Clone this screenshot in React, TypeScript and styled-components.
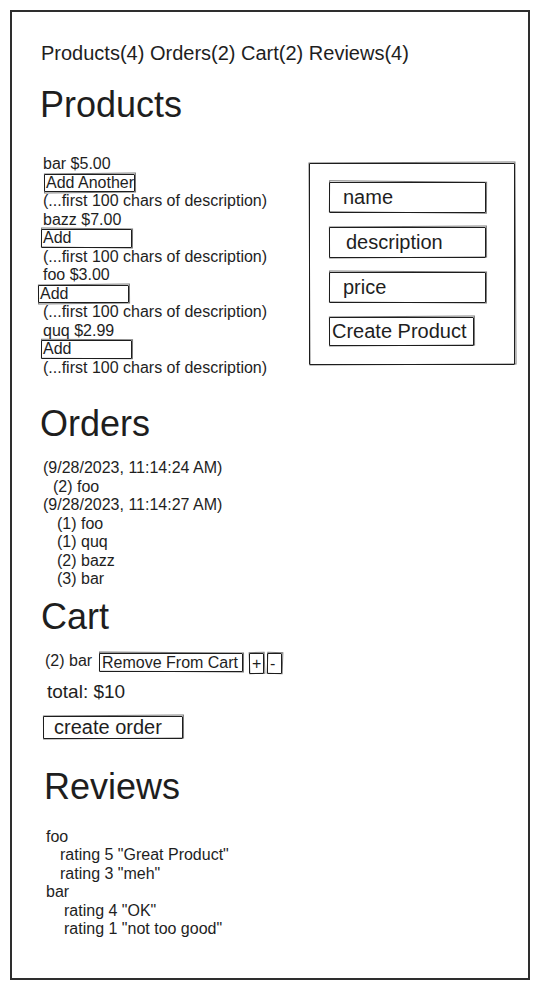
import styled, { createGlobalStyle, css } from "styled-components";

const GlobalStyle = createGlobalStyle`
  html, body {
    margin: 0;
    padding: 0;
    background: #ffffff;
  }
  body {
    font-family: "Liberation Sans", Arial, sans-serif;
    color: #1e1e1e;
  }
`;

// rough hand-drawn outline: a solid border plus a slightly tilted second stroke
const sketch = css<{ $tilt?: number }>`
  position: relative;
  border: 1.5px solid #1e1e1e;
  border-radius: 1px;
  &::after {
    content: "";
    position: absolute;
    inset: -2px -2px -1px -1px;
    border: 1px solid rgba(30, 30, 30, 0.6);
    transform: rotate(${(p) => p.$tilt ?? 0.4}deg);
    pointer-events: none;
  }
`;

const Frame = styled.div`
  box-sizing: border-box;
  width: 520px;
  height: 970px;
  margin: 10px;
  border: 2px solid #2e2e2e;
  padding: 30px 0 0 29px;
`;

const Nav = styled.nav`
  font-size: 20px;
  line-height: 23px;
  white-space: nowrap;
`;

const Heading = styled.h2<{ $top: number; $left?: number }>`
  margin: ${(p) => p.$top}px 0 0 ${(p) => p.$left ?? 0}px;
  font-size: 36px;
  line-height: 41px;
  font-weight: 400;
`;

const ProductsRow = styled.div`
  display: flex;
  align-items: flex-start;
  margin-top: 30px;
`;

const ProductList = styled.div`
  display: flex;
  flex-direction: column;
  width: 266px;
  margin-left: 2px;
  font-size: 16px;
  line-height: 18.5px;
`;

const Line = styled.div<{ $indent?: number }>`
  height: 18.5px;
  padding-left: ${(p) => p.$indent ?? 0}px;
  white-space: nowrap;
`;

const AddButton = styled.button<{ $tilt?: number; $shift?: number }>`
  ${sketch};
  box-sizing: border-box;
  display: block;
  width: 91px;
  height: 18.5px;
  margin-left: ${(p) => p.$shift ?? 0}px;
  padding: 0 0 0 1px;
  background: none;
  font: inherit;
  font-size: 16px;
  line-height: 16px;
  color: #1e1e1e;
  text-align: left;
  white-space: nowrap;
`;

const Panel = styled.form`
  ${sketch};
  box-sizing: border-box;
  display: flex;
  flex-direction: column;
  align-items: flex-start;
  gap: 14px;
  width: 206px;
  height: 202px;
  margin: 8px 0 0 0;
  padding: 18px 0 0 19px;
`;

const InputWrap = styled.div<{ $tilt?: number }>`
  ${sketch};
  box-sizing: border-box;
  width: 157px;
  height: 31px;
`;

const Input = styled.input<{ $pad?: number }>`
  box-sizing: border-box;
  width: 100%;
  height: 100%;
  border: none;
  outline: none;
  background: none;
  padding: 0 0 0 ${(p) => p.$pad ?? 13}px;
  font-family: "Liberation Sans", Arial, sans-serif;
  font-size: 20px;
  color: #1e1e1e;
  &::placeholder {
    color: #1e1e1e;
    opacity: 1;
  }
`;

const CreateButton = styled.button<{ $tilt?: number }>`
  ${sketch};
  box-sizing: border-box;
  width: 145px;
  height: 29px;
  padding: 0 0 0 2px;
  background: none;
  font-family: "Liberation Sans", Arial, sans-serif;
  font-size: 20px;
  color: #1e1e1e;
  text-align: left;
  white-space: nowrap;
`;

const TextList = styled.div<{ $top: number; $left?: number }>`
  margin: ${(p) => p.$top}px 0 0 ${(p) => p.$left ?? 0}px;
  font-size: 16px;
  line-height: 18.5px;
`;

const CartRow = styled.div`
  display: flex;
  align-items: flex-start;
  margin: 15px 0 0 4px;
  font-size: 16px;
  line-height: 18.5px;
`;

const CartLabel = styled.span`
  width: 54px;
  white-space: nowrap;
`;

const SmallButton = styled.button<{ $w: number; $h: number; $tilt?: number; $gap?: number; $top?: number }>`
  ${sketch};
  box-sizing: border-box;
  width: ${(p) => p.$w}px;
  height: ${(p) => p.$h}px;
  margin: ${(p) => p.$top ?? 0}px 0 0 ${(p) => p.$gap ?? 0}px;
  padding: 0 0 0 2px;
  background: none;
  font-family: "Liberation Sans", Arial, sans-serif;
  font-size: 16px;
  line-height: 15px;
  color: #1e1e1e;
  text-align: left;
  white-space: nowrap;
`;

const Total = styled.div`
  margin: 7px 0 0 6px;
  font-size: 19px;
  line-height: 22px;
`;

const OrderButton = styled.button<{ $tilt?: number }>`
  ${sketch};
  box-sizing: border-box;
  display: block;
  width: 140px;
  height: 23px;
  margin: 13px 0 0 2px;
  padding: 0 0 0 10px;
  background: none;
  font-family: "Liberation Sans", Arial, sans-serif;
  font-size: 20px;
  line-height: 20px;
  color: #1e1e1e;
  text-align: left;
`;

const products = [
  { name: "bar", price: "$5.00", label: "Add Another", shift: 1, tilt: -0.5 },
  { name: "bazz", price: "$7.00", label: "Add", shift: -2, tilt: 0.5 },
  { name: "foo", price: "$3.00", label: "Add", shift: -5, tilt: -0.6 },
  { name: "quq", price: "$2.99", label: "Add", shift: -2, tilt: 0.4 },
];

const orders: [string, number][] = [
  ["(9/28/2023, 11:14:24 AM)", 0],
  ["(2) foo", 10],
  ["(9/28/2023, 11:14:27 AM)", 0],
  ["(1) foo", 14],
  ["(1) quq", 14],
  ["(2) bazz", 14],
  ["(3) bar", 14],
];

const reviews: [string, number][] = [
  ["foo", 0],
  ['rating 5 "Great Product"', 14],
  ['rating 3 "meh"', 14],
  ["bar", 0],
  ['rating 4 "OK"', 18],
  ['rating 1 "not too good"', 18],
];

export default function App() {
  return (
    <>
      <GlobalStyle />
      <Frame>
        <Nav>Products(4) Orders(2) Cart(2) Reviews(4)</Nav>

        <Heading $top={19} $left={-1}>Products</Heading>
        <ProductsRow>
          <ProductList>
            {products.map((p) => (
              <div key={p.name}>
                <Line>
                  {p.name} {p.price}
                </Line>
                <AddButton type="button" $shift={p.shift} $tilt={p.tilt}>
                  {p.label}
                </AddButton>
                <Line>(...first 100 chars of description)</Line>
              </div>
            ))}
          </ProductList>

          <Panel $tilt={-0.3} onSubmit={(e) => e.preventDefault()}>
            <InputWrap $tilt={0.5}>
              <Input placeholder="name" />
            </InputWrap>
            <InputWrap $tilt={-0.4}>
              <Input placeholder="description" $pad={16} />
            </InputWrap>
            <InputWrap $tilt={0.3}>
              <Input placeholder="price" />
            </InputWrap>
            <CreateButton type="submit" $tilt={-0.4}>
              Create Product
            </CreateButton>
          </Panel>
        </ProductsRow>

        <Heading $top={26} $left={-1}>Orders</Heading>
        <TextList $top={15} $left={2}>
          {orders.map(([text, indent], i) => (
            <Line key={i} $indent={indent}>
              {text}
            </Line>
          ))}
        </TextList>

        <Heading $top={7}>Cart</Heading>
        <CartRow>
          <CartLabel>(2) bar</CartLabel>
          <SmallButton type="button" $w={144} $h={19} $tilt={0.3} $top={1}>
            Remove From Cart
          </SmallButton>
          <SmallButton type="button" $w={15} $h={21} $gap={6} $tilt={-2} $top={1}>
            +
          </SmallButton>
          <SmallButton type="button" $w={15} $h={21} $gap={3} $tilt={2} $top={1}>
            -
          </SmallButton>
        </CartRow>
        <Total>total: $10</Total>
        <OrderButton type="button" $tilt={-0.4}>
          create order
        </OrderButton>

        <Heading $top={27} $left={3}>Reviews</Heading>
        <TextList $top={21} $left={5}>
          {reviews.map(([text, indent], i) => (
            <Line key={i} $indent={indent}>
              {text}
            </Line>
          ))}
        </TextList>
      </Frame>
    </>
  );
}
